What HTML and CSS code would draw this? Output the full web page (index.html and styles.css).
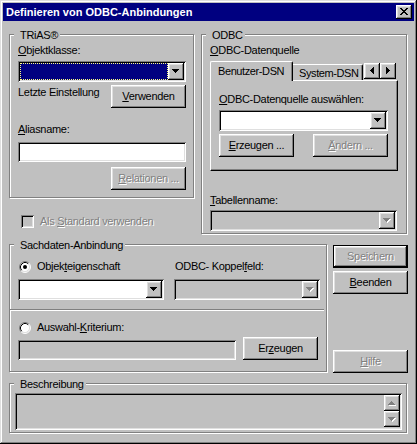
FILE: index.html
```html
<!DOCTYPE html>
<html lang="de">
<head>
<meta charset="utf-8">
<title>Definieren von ODBC-Anbindungen</title>
<link rel="stylesheet" href="styles.css">
</head>
<body>
<div class="window">
  <div class="titlebar">
    <span class="title">Definieren von ODBC-Anbindungen</span>
    <span class="closebtn raised"><svg width="8" height="7" viewBox="0 0 8 7"><path fill="#000" d="M0 0h2v1h-2zM6 0h2v1h-2zM1 1h2v1h-2zM5 1h2v1h-2zM2 2h4v1h-4zM3 3h2v1h-2zM2 4h4v1h-4zM1 5h2v1h-2zM5 5h2v1h-2zM0 6h2v1h-2zM6 6h2v1h-2z"/></svg></span>
  </div>
  <div class="client">
    <div class="row-top">
      <div class="col-left">
        <div class="group g-trias">
          <div class="legend">TRiAS®</div>
          <div class="lbl lbl-first"><u>O</u>bjektklasse:</div>
          <div class="combo combo-class">
            <div class="field field-sel"></div>
            <div class="dd raised"><svg width="7" height="4" viewBox="0 0 7 4"><path fill="#000" d="M0 0h7v1h-7zM1 1h5v1h-5zM2 2h3v1h-3zM3 3h1v1h-1z"/></svg></div>
          </div>
          <div class="row-last">
            <span class="lbl-inline">Letzte Einstellung</span>
            <div class="btn"><span><u>V</u>erwenden</span></div>
          </div>
          <div class="lbl lbl-alias"><u>A</u>liasname:</div>
          <div class="edit edit-alias"></div>
          <div class="row-rel">
            <div class="btn disabled"><span><u>R</u>elationen ...</span></div>
          </div>
        </div>
        <div class="check-row disabled">
          <span class="checkbox"></span>
          <span>Als <u>S</u>tandard verwenden</span>
        </div>
      </div>
      <div class="group g-odbc">
        <div class="legend">ODBC</div>
        <div class="lbl lbl-first"><u>O</u>DBC-Datenquelle</div>
        <div class="tabstrip">
          <div class="tab tab-sel">Benutzer-DSN</div>
          <div class="tab tab-sys">System-DSN</div>
          <div class="tab-arrows">
            <div class="arrowbtn arrow-h raised"><svg width="4" height="7" viewBox="0 0 4 7"><path fill="#000" d="M3 0h1v7h-1zM2 1h1v5h-1zM1 2h1v3h-1zM0 3h1v1h-1z"/></svg></div>
            <div class="arrowbtn arrow-h raised"><svg width="4" height="7" viewBox="0 0 4 7"><path fill="#000" d="M0 0h1v7h-1zM1 1h1v5h-1zM2 2h1v3h-1zM3 3h1v1h-1z"/></svg></div>
          </div>
        </div>
        <div class="tabpanel">
          <div class="lbl"><u>O</u>DBC-Datenquelle auswählen:</div>
          <div class="combo combo-dsn">
            <div class="field"></div>
            <div class="dd raised"><svg width="7" height="4" viewBox="0 0 7 4"><path fill="#000" d="M0 0h7v1h-7zM1 1h5v1h-5zM2 2h3v1h-3zM3 3h1v1h-1z"/></svg></div>
          </div>
          <div class="row-dsn">
            <div class="btn"><span><u>E</u>rzeugen ...</span></div>
            <div class="btn disabled"><span><u>Ä</u>ndern ...</span></div>
          </div>
        </div>
        <div class="lbl lbl-table"><u>T</u>abellenname:</div>
        <div class="combo combo-table off">
          <div class="field"></div>
          <div class="dd raised"><svg width="8" height="5" viewBox="0 0 8 5"><path fill="#fff" transform="translate(1 1)" d="M0 0h7v1h-7zM1 1h5v1h-5zM2 2h3v1h-3zM3 3h1v1h-1z"/><path fill="#808080" d="M0 0h7v1h-7zM1 1h5v1h-5zM2 2h3v1h-3zM3 3h1v1h-1z"/></svg></div>
        </div>
      </div>
    </div>

    <div class="row-mid">
      <div class="group g-sach">
        <div class="legend">Sachdaten-Anbindung</div>
        <div class="grid-two radio-row1">
          <div class="radio-line">
            <svg class="radio" width="12" height="12" viewBox="0 0 12 12"><circle cx="6" cy="6" r="5" fill="#fff"/><path d="M2.11 9.89A5.5 5.5 0 0 1 9.89 2.11" fill="none" stroke="#808080"/><path d="M9.89 2.11A5.5 5.5 0 0 1 2.11 9.89" fill="none" stroke="#fff"/><path d="M2.82 9.18A4.5 4.5 0 0 1 9.18 2.82" fill="none" stroke="#000"/><path d="M9.18 2.82A4.5 4.5 0 0 1 2.82 9.18" fill="none" stroke="#dfdfdf"/><circle cx="6" cy="6" r="2" fill="#000"/></svg>
            <span>Objek<u>t</u>eigenschaft</span>
          </div>
          <div class="lbl-koppel">ODBC- Koppel<u>f</u>eld:</div>
        </div>
        <div class="grid-two combos-row">
          <div class="combo">
            <div class="field"></div>
            <div class="dd raised"><svg width="7" height="4" viewBox="0 0 7 4"><path fill="#000" d="M0 0h7v1h-7zM1 1h5v1h-5zM2 2h3v1h-3zM3 3h1v1h-1z"/></svg></div>
          </div>
          <div class="combo off">
            <div class="field"></div>
            <div class="dd raised"><svg width="8" height="5" viewBox="0 0 8 5"><path fill="#fff" transform="translate(1 1)" d="M0 0h7v1h-7zM1 1h5v1h-5zM2 2h3v1h-3zM3 3h1v1h-1z"/><path fill="#808080" d="M0 0h7v1h-7zM1 1h5v1h-5zM2 2h3v1h-3zM3 3h1v1h-1z"/></svg></div>
          </div>
        </div>
        <div class="separator"></div>
        <div class="radio-line radio-row2">
          <svg class="radio" width="12" height="12" viewBox="0 0 12 12"><circle cx="6" cy="6" r="5" fill="#fff"/><path d="M2.11 9.89A5.5 5.5 0 0 1 9.89 2.11" fill="none" stroke="#808080"/><path d="M9.89 2.11A5.5 5.5 0 0 1 2.11 9.89" fill="none" stroke="#fff"/><path d="M2.82 9.18A4.5 4.5 0 0 1 9.18 2.82" fill="none" stroke="#000"/><path d="M9.18 2.82A4.5 4.5 0 0 1 2.82 9.18" fill="none" stroke="#dfdfdf"/></svg>
          <span>Auswahl-<u>K</u>riterium:</span>
        </div>
        <div class="row-crit">
          <div class="edit off edit-crit"></div>
          <div class="btn"><span>Er<u>z</u>eugen</span></div>
        </div>
      </div>
      <div class="btn-col">
        <div class="btn btn-default disabled"><span>Speichern</span></div>
        <div class="btn"><span><u>B</u>eenden</span></div>
        <div class="btn disabled btn-help"><span><u>H</u>ilfe</span></div>
      </div>
    </div>

    <div class="group g-desc">
      <div class="legend">Beschreibung</div>
      <div class="memo">
        <div class="vscroll">
          <div class="arrowbtn arrow-v raised"><svg width="8" height="5" viewBox="0 0 8 5"><path fill="#fff" transform="translate(1 1)" d="M3 0h1v1h-1zM2 1h3v1h-3zM1 2h5v1h-5zM0 3h7v1h-7z"/><path fill="#808080" d="M3 0h1v1h-1zM2 1h3v1h-3zM1 2h5v1h-5zM0 3h7v1h-7z"/></svg></div>
          <div class="arrowbtn arrow-v raised"><svg width="8" height="5" viewBox="0 0 8 5"><path fill="#fff" transform="translate(1 1)" d="M0 0h7v1h-7zM1 1h5v1h-5zM2 2h3v1h-3zM3 3h1v1h-1z"/><path fill="#808080" d="M0 0h7v1h-7zM1 1h5v1h-5zM2 2h3v1h-3zM3 3h1v1h-1z"/></svg></div>
        </div>
      </div>
    </div>
  </div>
</div>
</body>
</html>
```

FILE: styles.css
```css
* { box-sizing: border-box; }

html, body {
  margin: 0;
  padding: 0;
  background: #c0c0c0;
}

body {
  font-family: "Liberation Sans", Arial, sans-serif;
  font-size: 11px;
  line-height: 13px;
  letter-spacing: -0.3px;
  color: #000;
}

u { text-decoration: underline; text-underline-offset: 1px; }

svg { display: block; shape-rendering: crispEdges; }
svg.radio { shape-rendering: auto; }

.window {
  width: 417px;
  height: 444px;
  padding: 3px;
  background: #c0c0c0;
  box-shadow: inset -1px -1px 0 #000, inset 1px 1px 0 #dfdfdf, inset -2px -2px 0 #808080, inset 2px 2px 0 #fff;
}

.raised {
  background: #c0c0c0;
  box-shadow: inset -1px -1px 0 #000, inset 1px 1px 0 #fff, inset -2px -2px 0 #808080, inset 2px 2px 0 #dfdfdf;
}

.titlebar {
  height: 18px;
  background: #000080;
  display: flex;
  align-items: center;
  justify-content: space-between;
  padding: 0 2px 0 3px;
}

.title {
  color: #fff;
  font-weight: bold;
  line-height: 18px;
  letter-spacing: 0;
}

.closebtn {
  display: block;
  width: 16px;
  height: 14px;
  padding: 3px 0 0 4px;
}

.client {
  padding: 13px 0 0 6px;
}

.row-top {
  display: flex;
  align-items: flex-start;
  gap: 7px;
}

.col-left { width: 185px; }

.group {
  border: 1px solid #808080;
  box-shadow: 1px 1px 0 #fff, inset 1px 1px 0 #fff;
  padding: 0 8px;
}

.legend {
  width: max-content;
  margin: -6px 0 0 -4px;
  padding: 0 2px 0 6px;
  background: #c0c0c0;
}

.g-trias { width: 185px; height: 164px; }
.g-odbc { width: 206px; height: 200px; }

.lbl-first { margin-top: 2px; }

/* controls */
.combo {
  display: flex;
  height: 21px;
  padding: 2px;
  background: #fff;
  box-shadow: inset 1px 1px 0 #808080, inset -1px -1px 0 #fff, inset 2px 2px 0 #000, inset -2px -2px 0 #dfdfdf;
}

.combo .field { flex: 1; }

.combo.off { background: #c0c0c0; }

.field-sel {
  background: #000080;
  border: 1px dotted #ffff80;
}

.dd {
  width: 16px;
  height: 17px;
  padding: 6px 0 0 4px;
}

.edit {
  height: 20px;
  background: #fff;
  box-shadow: inset 1px 1px 0 #808080, inset -1px -1px 0 #fff, inset 2px 2px 0 #000, inset -2px -2px 0 #dfdfdf;
}

.edit.off { background: #c0c0c0; }

.btn {
  width: 75px;
  height: 23px;
  display: flex;
  align-items: center;
  justify-content: center;
  line-height: 13px;
  background: #c0c0c0;
  box-shadow: inset -1px -1px 0 #000, inset 1px 1px 0 #fff, inset -2px -2px 0 #808080, inset 2px 2px 0 #dfdfdf;
  flex: none;
}

.btn-default {
  box-shadow: inset 0 0 0 1px #000, inset -2px -2px 0 #000, inset 2px 2px 0 #fff, inset -3px -3px 0 #808080, inset 3px 3px 0 #dfdfdf;
}

.disabled, .btn.disabled span {
  color: #808080;
  text-shadow: 1px 1px 0 #fff;
}

/* TRiAS group */
.combo-class { width: 168px; margin-top: 4px; }

.row-last {
  width: 168px;
  margin-top: 3px;
  display: flex;
  justify-content: space-between;
  align-items: flex-start;
}

.lbl-inline { margin-top: 1px; }

.lbl-alias { margin-top: 15px; }

.edit-alias { width: 168px; margin-top: 6px; }

.row-rel {
  width: 168px;
  margin-top: 5px;
  display: flex;
  justify-content: flex-end;
}

.check-row {
  margin: 17px 0 0 12px;
  display: flex;
  align-items: flex-start;
  gap: 6px;
}

.checkbox {
  width: 13px;
  height: 13px;
  background: #c0c0c0;
  box-shadow: inset 1px 1px 0 #808080, inset -1px -1px 0 #fff, inset 2px 2px 0 #000, inset -2px -2px 0 #dfdfdf;
  text-shadow: none;
}

/* ODBC group */
.tabstrip {
  height: 19px;
  margin-top: 4px;
  display: flex;
  align-items: flex-end;
}

.tab {
  height: 16px;
  padding: 2px 0 0 7px;
  background: #c0c0c0;
  border-top: 1px solid #fff;
  border-left: 1px solid #fff;
  border-right: 1px solid #000;
  border-radius: 2px 2px 0 0;
  box-shadow: inset -1px 0 0 #808080;
  white-space: nowrap;
  overflow: hidden;
  letter-spacing: -0.4px;
}

.tab-sel {
  width: 83px;
  height: 20px;
  padding-top: 3px;
  margin-bottom: -1px;
  position: relative;
  z-index: 1;
}

.tab-sys {
  width: 72px;
  margin-left: -2px;
}

.tab-arrows {
  display: flex;
  align-self: flex-start;
  margin: 2px 2px 0 auto;
}

.arrowbtn {
  width: 16px;
  height: 16px;
}

.arrow-h { padding: 4px 0 0 6px; }
.arrow-v { padding: 6px 0 0 4px; }

.tabpanel {
  height: 91px;
  border: 1px solid;
  border-color: #fff #000 #000 #fff;
  box-shadow: inset -1px -1px 0 #808080;
  padding: 12px 0 0 8px;
}

.combo-dsn { width: 169px; margin-top: 4px; }

.row-dsn {
  width: 169px;
  margin-top: 3px;
  display: flex;
  justify-content: space-between;
}

.lbl-table { margin-top: 23px; }

.combo-table { width: 187px; margin-top: 3px; }

/* middle row */
.row-mid {
  margin-top: 10px;
  display: flex;
  align-items: flex-start;
  gap: 6px;
}

.g-sach { width: 318px; height: 128px; }

.grid-two {
  display: grid;
  grid-template-columns: 146px 146px;
  column-gap: 10px;
}

.radio-row1 { margin-top: 8px; }

.radio-line {
  display: flex;
  align-items: center;
  gap: 6px;
  height: 13px;
  padding-left: 1px;
}

.lbl-koppel { padding-left: 1px; }

.combos-row { margin-top: 6px; }

.separator {
  width: 314px;
  height: 2px;
  margin: 9px 0 0 -8px;
  border-top: 1px solid #808080;
  border-bottom: 1px solid #fff;
}

.radio-row2 { margin-top: 10px; }

.row-crit {
  margin-top: 3px;
  display: flex;
  align-items: flex-end;
  gap: 7px;
}

.edit-crit { width: 222px; }

.btn-col {
  width: 75px;
  height: 128px;
  margin-top: 1px;
  display: flex;
  flex-direction: column;
  gap: 3px;
}

.btn-help { margin-top: auto; }

/* description */
.g-desc {
  width: 398px;
  height: 50px;
  margin-top: 10px;
}

.memo {
  width: 387px;
  height: 37px;
  margin: 2px 0 0 -3px;
  padding: 2px;
  background: #c0c0c0;
  display: flex;
  justify-content: flex-end;
  box-shadow: inset 1px 1px 0 #808080, inset -1px -1px 0 #fff, inset 2px 2px 0 #000, inset -2px -2px 0 #dfdfdf;
}

.vscroll {
  width: 16px;
  display: flex;
  flex-direction: column;
}
```
